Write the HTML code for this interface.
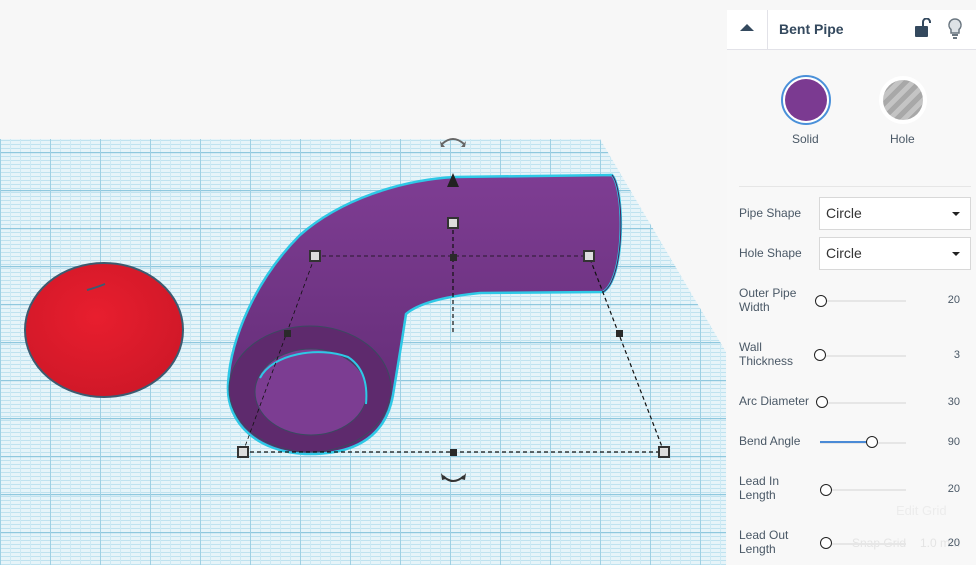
<!DOCTYPE html>
<html><head><meta charset="utf-8"><style>
*{margin:0;padding:0;box-sizing:border-box}
body{width:976px;height:565px;overflow:hidden;background:#f7f7f7;font-family:"Liberation Sans",sans-serif;position:relative}
.a{position:absolute}
.lbl{position:absolute;left:739px;font-size:12px;color:#4a5866;line-height:14px}
.val{position:absolute;right:16px;font-size:11px;color:#4a5866;text-align:right}
.trk{position:absolute;left:820px;width:86px;height:2px;background:#e6e6e6}
.knob{position:absolute;width:12px;height:12px;border:1.5px solid #222;border-radius:50%;background:#fff}
.sel{position:absolute;left:819px;width:152px;height:33px;border:1px solid #d8d8d8;background:#fff;font-size:14px;color:#333;padding:7px 0 0 6px}
.sel:after{content:"";position:absolute;right:10px;top:14px;border:4px solid transparent;border-top:4px solid #222}
</style></head><body>
<svg class="a" style="left:0;top:0" width="976" height="565">
<defs>
<pattern id="g" width="10" height="4" patternUnits="userSpaceOnUse">
<rect width="10" height="4" fill="#e6f4f9"/>
<rect width="10" height="1" fill="#bfe2ef"/>
<rect width="1" height="4" fill="#cde9f3"/>
</pattern>
<pattern id="g2" width="50" height="38" patternUnits="userSpaceOnUse">
<rect width="50" height="1.2" fill="#8fc8de"/>
<rect width="1" height="38" fill="#9fd0e3"/>
</pattern>
<linearGradient id="pg" x1="0" y1="0" x2="0" y2="1"><stop offset="0" stop-color="#7e3d93"/><stop offset="1" stop-color="#5f2a72"/></linearGradient>
<radialGradient id="ap" cx="0.45" cy="0.4" r="0.6"><stop offset="0" stop-color="#e81e2e"/><stop offset="1" stop-color="#d01828"/></radialGradient>
</defs>
<polygon points="0,139 600,139 726,352 726,565 0,565" fill="url(#g)"/>
<polygon points="0,139 600,139 726,352 726,565 0,565" fill="url(#g2)"/>
<ellipse cx="104" cy="330" rx="79" ry="67" fill="url(#ap)" stroke="#3d5b70" stroke-width="2"/>
<path d="M87 290 Q95 288 105 284" stroke="#3d5b70" stroke-width="2" fill="none"/>
<path d="M228 385 C230 340 255 280 300 235 C340 200 400 180 455 177 L612 175 C625 190 625 280 603 292 L480 293 C450 296 420 302 406 314 L402 340 L393 395 C385 440 350 455 305 454 C260 452 226 425 228 385 Z" fill="url(#pg)" stroke="#2ec8e6" stroke-width="2.5"/>
<path d="M612 175 C625 190 625 280 603 292" fill="none" stroke="#4a2058" stroke-width="1"/>
<ellipse cx="310" cy="389" rx="81" ry="63" fill="#5e2a6d" stroke="#3a4a60" stroke-width="1"/>
<ellipse cx="311" cy="392" rx="56" ry="43" fill="#7c3d92" stroke="#3a4a60" stroke-width="1"/>
<path d="M260 378 C272 354 318 346 348 357 C362 366 368 382 366 404" fill="none" stroke="#2ec8e6" stroke-width="2"/>
<g stroke="#111" stroke-width="1.2" stroke-dasharray="4,3" fill="none">
<line x1="243" y1="452" x2="664" y2="452"/>
<line x1="243" y1="452" x2="315" y2="256" stroke-width="0.8"/>
<line x1="664" y1="452" x2="589" y2="256"/>
<line x1="315" y1="256" x2="589" y2="256" stroke-width="0.8"/>
<line x1="453" y1="223" x2="453" y2="333"/>
</g>
<g fill="#ddd" stroke="#333" stroke-width="2">
<rect x="238" y="447" width="10" height="10"/><rect x="659" y="447" width="10" height="10"/>
<rect x="310" y="251" width="10" height="10"/><rect x="584" y="251" width="10" height="10"/>
<rect x="448" y="218" width="10" height="10"/>
</g>
<g fill="#2a2a2a">
<rect x="450" y="449" width="7" height="7"/><rect x="284" y="330" width="7" height="7"/>
<rect x="616" y="330" width="7" height="7"/><rect x="450" y="254" width="7" height="7"/>
</g>
<path d="M453 173 L459 187 L447 187 Z" fill="#222"/>
<path d="M442 144 Q453 134 464 144" stroke="#666" stroke-width="2" fill="none"/>
<path d="M440 141 L445 147 L441 147Z M466 141 L461 147 L465 147Z" fill="#666"/>
<path d="M443 476 Q453 486 464 476" stroke="#333" stroke-width="2" fill="none"/>
<path d="M441 473 L446 479 L442 480Z M466 473 L461 479 L465 480Z" fill="#333"/>
</svg>
<div class="a" style="left:727px;top:10px;width:249px;height:555px;background:rgba(248,248,248,0.96)"></div>
<div class="a" style="left:727px;top:10px;width:249px;height:40px;background:#fff;border-bottom:1px solid #e2e2e8"></div>
<div class="a" style="left:767px;top:10px;width:1px;height:40px;background:#e2e2e8"></div>
<div class="a" style="left:740px;top:24px;border:7px solid transparent;border-bottom:7px solid #34495e;border-top:0"></div>
<div class="a" style="left:779px;top:21px;font-size:14px;font-weight:bold;color:#34495e">Bent Pipe</div>
<svg class="a" style="left:914px;top:18px" width="50" height="22">
<rect x="1" y="8" width="13" height="11" rx="1" fill="#34495e"/>
<path d="M9 8 V4 a3.5 3.5 0 0 1 7 0 V5" stroke="#34495e" stroke-width="2" fill="none"/>
<path d="M41 1 a6 6 0 0 0 -4 10.5 V15 h8 V11.5 a6 6 0 0 0 -4 -10.5Z" fill="#dde2e6" stroke="#6a7680" stroke-width="1.5"/>
<rect x="38" y="16" width="6" height="2" fill="#6a7680"/><rect x="39" y="19" width="4" height="2" fill="#6a7680"/>
</svg>
<div class="a" style="left:781px;top:75px;width:50px;height:50px;border-radius:50%;border:2px solid #4a90d9;background:#fff"></div>
<div class="a" style="left:785px;top:79px;width:42px;height:42px;border-radius:50%;background:#7b3a91"></div>
<div class="a" style="left:879px;top:76px;width:48px;height:48px;border-radius:50%;background:#fff"></div>
<div class="a" style="left:883px;top:80px;width:40px;height:40px;border-radius:50%;background:repeating-linear-gradient(135deg,#c4c4c4 0 5px,#a8a8a8 5px 10px)"></div>
<div class="a" style="left:792px;top:132px;font-size:12px;color:#4a5866">Solid</div>
<div class="a" style="left:890px;top:132px;font-size:12px;color:#4a5866">Hole</div>
<div class="a" style="left:739px;top:186px;width:232px;height:1px;background:#e6e6e6"></div>
<div class="lbl" style="top:206px">Pipe Shape</div><div class="sel" style="top:197px">Circle</div>
<div class="lbl" style="top:246px">Hole Shape</div><div class="sel" style="top:237px">Circle</div>
<div class="lbl" style="top:286px">Outer Pipe<br>Width</div><div class="trk" style="top:300px"></div><div class="knob" style="left:815px;top:295px"></div><div class="val" style="top:294px">20</div>
<div class="lbl" style="top:340px">Wall<br>Thickness</div><div class="trk" style="top:355px"></div><div class="knob" style="left:814px;top:349px"></div><div class="val" style="top:349px">3</div>
<div class="lbl" style="top:394px">Arc Diameter</div><div class="trk" style="top:402px"></div><div class="knob" style="left:816px;top:396px"></div><div class="val" style="top:396px">30</div>
<div class="lbl" style="top:434px">Bend Angle</div><div class="trk" style="top:442px"></div><div class="a" style="left:820px;top:441px;width:50px;height:2px;background:#4a8ad6"></div><div class="knob" style="left:866px;top:436px"></div><div class="val" style="top:436px">90</div>
<div class="a" style="left:896px;top:503px;font-size:13px;color:#ececec">Edit Grid</div>
<div class="lbl" style="top:474px">Lead In<br>Length</div><div class="trk" style="top:489px"></div><div class="knob" style="left:820px;top:484px"></div><div class="val" style="top:483px">20</div>
<div class="a" style="left:852px;top:536px;font-size:12px;color:#e4e4e4">Snap Grid</div>
<div class="a" style="left:920px;top:536px;font-size:12px;color:#e4e4e4">1.0 mm</div>
<div class="lbl" style="top:528px">Lead Out<br>Length</div><div class="trk" style="top:543px"></div><div class="knob" style="left:820px;top:537px"></div><div class="val" style="top:537px">20</div>
</body></html>
